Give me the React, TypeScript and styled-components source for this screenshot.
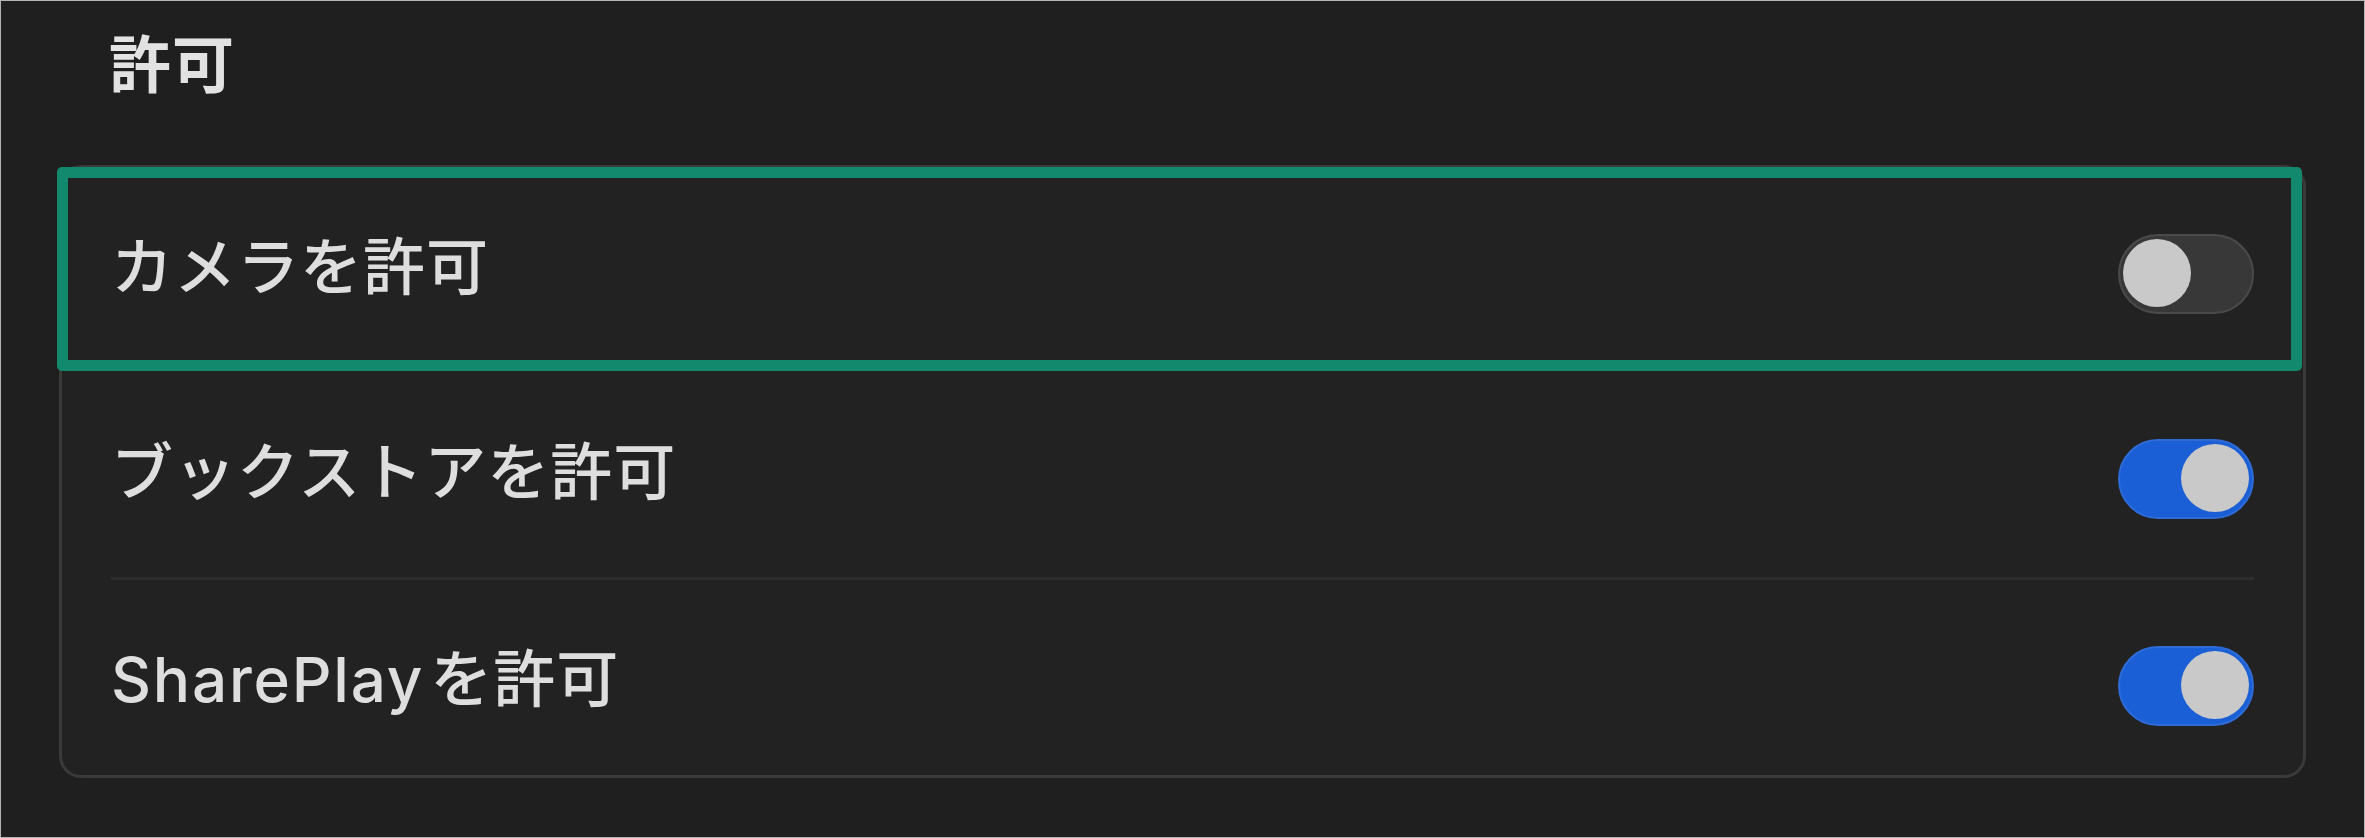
import * as React from "react"
import styled, { createGlobalStyle } from "styled-components"

const GlobalStyle = createGlobalStyle`
  html, body {
    margin: 0;
    padding: 0;
    background: #1f1f1f;
  }
  * {
    box-sizing: border-box;
  }
`

const Page = styled.div`
  width: 2365px;
  height: 838px;
  border: 1px solid #b4b4b4;
  background: #1f1f1f;
  padding: 34px 59px 0 58px;
  font-family: "Inter", "Noto Sans CJK JP", sans-serif;
  color: #dedede;
  display: flex;
  flex-direction: column;
`

const SectionTitle = styled.h2`
  margin: 0 0 68px 0;
  padding-left: 50px;
  font-size: 62px;
  line-height: 62px;
  font-weight: 600;
  letter-spacing: 1px;
  color: #e2e2e2;
`

const Card = styled.div`
  width: 2247px;
  border: 3px solid #3a3a3a;
  border-radius: 22px;
  background: #222222;
  display: flex;
  flex-direction: column;
`

const Row = styled.div<{ $height: number; $shift?: number; $highlight?: boolean }>`
  position: relative;
  height: ${(p) => p.$height}px;
  padding: ${(p) => p.$shift || 0}px 49px 0 49px;
  display: flex;
  align-items: center;
  justify-content: space-between;

  ${(p) =>
    p.$highlight &&
    `
    &::after {
      content: "";
      position: absolute;
      top: -1px;
      left: -5px;
      right: 1px;
      bottom: 3px;
      border: 11px solid #12886c;
      border-radius: 5px;
      pointer-events: none;
    }
  `}
`

const Label = styled.span`
  font-size: 62px;
  line-height: 62px;
  font-weight: 500;
  letter-spacing: 1px;
  padding-bottom: 6px;
  white-space: nowrap;
`

const Latin = styled.span`
  letter-spacing: 1.8px;
  margin-right: 6px;
`

const Divider = styled.div`
  height: 3px;
  margin: 0 49px;
  background: #2d2d2d;
`

const Track = styled.div<{ $on: boolean }>`
  position: relative;
  width: 136px;
  height: 80px;
  margin-top: 6px;
  border-radius: 40px;
  flex-shrink: 0;
  background: ${(p) => (p.$on ? "#1a5fd6" : "#383838")};
  border: 2px solid ${(p) => (p.$on ? "#2e6bd6" : "#4a4a4a")};
`

const Knob = styled.div<{ $on: boolean }>`
  position: absolute;
  top: 3px;
  left: ${(p) => (p.$on ? "61px" : "3px")};
  width: 68px;
  height: 68px;
  border-radius: 50%;
  background: #c9c9c9;
`

const Toggle = ({ on }: { on: boolean }) => (
  <Track $on={on}>
    <Knob $on={on} />
  </Track>
)

export default function App() {
  return (
    <>
      <GlobalStyle />
      <Page>
        <SectionTitle>許可</SectionTitle>
        <Card>
          <Row $height={206} $highlight>
            <Label>カメラを許可</Label>
            <Toggle on={false} />
          </Row>
          <Row $height={203}>
            <Label>ブックストアを許可</Label>
            <Toggle on={true} />
          </Row>
          <Divider />
          <Row $height={195} $shift={11}>
            <Label>
              <Latin>SharePlay</Latin>を許可
            </Label>
            <Toggle on={true} />
          </Row>
        </Card>
      </Page>
    </>
  )
}
